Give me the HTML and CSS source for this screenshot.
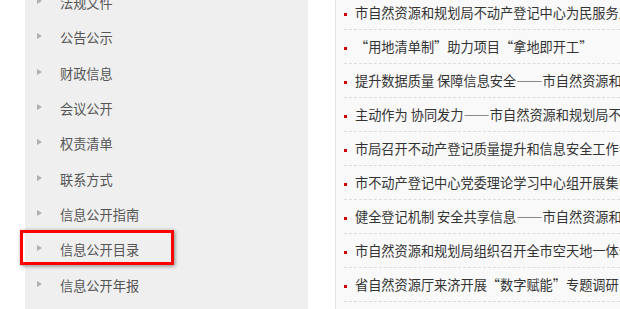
FILE: index.html
```html
<!DOCTYPE html>
<html lang="zh-CN">
<head>
<meta charset="utf-8">
<title>信息公开</title>
<link rel="stylesheet" href="styles.css">
</head>
<body>
<div class="page">
  <aside class="sidebar">
    <ul class="nav">
      <li class="nav-item"><span class="arrow"></span><a href="#">法规文件</a></li>
      <li class="nav-item"><span class="arrow"></span><a href="#">公告公示</a></li>
      <li class="nav-item"><span class="arrow"></span><a href="#">财政信息</a></li>
      <li class="nav-item"><span class="arrow"></span><a href="#">会议公开</a></li>
      <li class="nav-item"><span class="arrow"></span><a href="#">权责清单</a></li>
      <li class="nav-item"><span class="arrow"></span><a href="#">联系方式</a></li>
      <li class="nav-item"><span class="arrow"></span><a href="#">信息公开指南</a></li>
      <li class="nav-item"><span class="arrow"></span><a href="#">信息公开目录</a><span class="highlight"></span></li>
      <li class="nav-item"><span class="arrow"></span><a href="#">信息公开年报</a></li>
    </ul>
  </aside>
  <main class="news">
    <ul class="news-list">
      <li class="news-item"><span class="bullet"></span><a href="#">市自然资源和规划局不动产登记中心为民服务工作纪实</a></li>
      <li class="news-item"><span class="bullet"></span><a href="#">“用地清单制”助力项目“拿地即开工”</a></li>
      <li class="news-item"><span class="bullet"></span><a href="#">提升数据质量 保障信息安全——市自然资源和规划局</a></li>
      <li class="news-item"><span class="bullet"></span><a href="#">主动作为 协同发力——市自然资源和规划局不动产登记中心</a></li>
      <li class="news-item"><span class="bullet"></span><a href="#">市局召开不动产登记质量提升和信息安全工作会议</a></li>
      <li class="news-item"><span class="bullet"></span><a href="#">市不动产登记中心党委理论学习中心组开展集中学习</a></li>
      <li class="news-item"><span class="bullet"></span><a href="#">健全登记机制 安全共享信息——市自然资源和规划局</a></li>
      <li class="news-item"><span class="bullet"></span><a href="#">市自然资源和规划局组织召开全市空天地一体化会议</a></li>
      <li class="news-item"><span class="bullet"></span><a href="#">省自然资源厅来济开展“数字赋能”专题调研</a></li>
    </ul>
  </main>
</div>
</body>
</html>
```
FILE: styles.css
```css
html, body {
  margin: 0;
  padding: 0;
  height: 100%;
  overflow: hidden;
  background: #fff;
  font-family: "Noto Sans CJK SC", "Microsoft YaHei", sans-serif;
  font-size: 13.2px;
}

a {
  color: inherit;
  text-decoration: none;
}

.page {
  display: flex;
  height: 309px;
  padding-left: 25px;
  gap: 27px;
}

.sidebar {
  flex: none;
  width: 283px;
  background: #efefef;
}

.nav {
  list-style: none;
  margin: -15px 0 0;
  padding: 0;
}

.nav-item {
  position: relative;
  display: flex;
  align-items: center;
  height: 35.3px;
  padding-left: 12px;
  color: #555;
}

.arrow {
  flex: none;
  width: 0;
  height: 0;
  border-left: 5px solid #b0b0b0;
  border-top: 3.5px solid transparent;
  border-bottom: 3.5px solid transparent;
  margin-right: 18px;
  margin-top: -3px;
}

.highlight {
  position: absolute;
  left: -5px;
  top: -2px;
  width: 154px;
  height: 35px;
  box-sizing: border-box;
  border: 3px solid #f00;
  box-shadow: 1px 1px 4px rgba(0, 0, 0, 0.45);
  pointer-events: none;
}

.news {
  flex: 1;
  min-width: 0;
  overflow: hidden;
  background: #f9f9f9;
  border-left: 1px solid #e3e3e3;
  padding-left: 8px;
}

.news-list {
  list-style: none;
  margin: -4px 0 0;
  padding: 0;
}

.news-item {
  display: flex;
  align-items: center;
  height: 33px;
  border-bottom: 1px dashed #dcdcdc;
  white-space: nowrap;
  color: #333;
}

.bullet {
  flex: none;
  width: 3px;
  height: 3px;
  background: #c00;
  margin-right: 8px;
  margin-top: 4px;
}
```
